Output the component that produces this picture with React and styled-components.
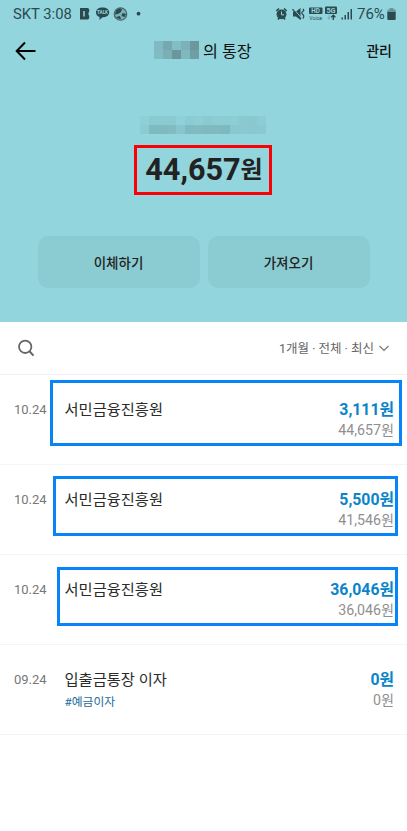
import React from 'react';
import styled, { createGlobalStyle } from 'styled-components';

const GlobalStyle = createGlobalStyle`
  * {
    box-sizing: border-box;
  }

  body {
    margin: 0;
    background: #fff;
    font-family: Roboto, 'Noto Sans CJK KR', sans-serif;
    color: #222;
  }
`;

const Screen = styled.div`
  width: 407px;
  height: 831px;
  overflow: hidden;
  background: #fff;
`;

const Header = styled.header`
  height: 322px;
  background: #92d5dd;
`;

const StatusBar = styled.div`
  display: flex;
  justify-content: space-between;
  align-items: center;
  height: 28px;
  padding: 0 11px 0 13px;
  color: #2b4a50;
  font-size: 15px;
  line-height: 28px;

  svg {
    display: block;
  }
`;

const StatusGroup = styled.div`
  display: flex;
  align-items: center;
  white-space: nowrap;
`;

const StatusText = styled.span`
  width: ${props => props.$width}px;
  font-size: ${props => props.$size}px;
`;

const TitleBar = styled.div`
  display: grid;
  grid-template-columns: 139px 1fr 60px;
  align-items: center;
  height: 46px;
  padding: 0 15px;

  svg {
    display: block;
  }
`;

const AccountName = styled.div`
  display: flex;
  align-items: flex-start;
  color: #111;
  font-size: 16.2px;
  line-height: 21px;
  white-space: nowrap;
`;

const Manage = styled.button`
  padding: 0;
  border: 0;
  background: none;
  color: #111;
  font: inherit;
  font-size: 14px;
  font-weight: 500;
  line-height: 24px;
  text-align: right;
`;

const Mosaic = styled.div`
  display: grid;
  grid-template-columns: repeat(${props => props.$columns}, 9px);
  grid-auto-rows: 9px;
`;

const Tile = styled.span`
  background: ${props => props.$color};
`;

const Summary = styled.div`
  display: flex;
  flex-direction: column;
  align-items: center;
  padding-top: 42px;

  > ${Mosaic} {
    margin-right: 2px;
  }
`;

const Balance = styled.div`
  display: flex;
  justify-content: center;
  align-items: center;
  width: 138px;
  height: 50px;
  margin: 11px 1px 0 0;
  padding-left: 2px;
  border: 3px solid #fb0007;
  color: #222;
  font-size: 30.6px;
  font-weight: 700;
  line-height: 44px;
  white-space: nowrap;

  small {
    font-size: 24px;
    line-height: 44px;
  }
`;

const Actions = styled.div`
  display: flex;
  gap: 8px;
  margin-top: 41px;
`;

const ActionButton = styled.button`
  width: 162px;
  height: 52px;
  padding: 0;
  border: 0;
  border-radius: 10px;
  background: #8bccd2;
  color: #222;
  font: inherit;
  font-size: 13.5px;
  font-weight: 500;
`;

const Toolbar = styled.div`
  display: flex;
  justify-content: space-between;
  align-items: center;
  height: 53px;
  padding: 0 18px;
  border-bottom: 1px solid #f1f1f1;

  svg {
    display: block;
  }
`;

const Filter = styled.div`
  display: flex;
  align-items: center;
  gap: 5px;
  padding-top: 1px;
  color: #666;
  font-size: 12.5px;
  line-height: 20px;
  white-space: nowrap;
`;

const Row = styled.div`
  position: relative;
  display: grid;
  grid-template-columns: 50.5px 1fr auto;
  align-items: start;
  height: 90px;
  padding: 24px 13px 0 14px;
  border-bottom: 1px solid #f4f4f4;
  white-space: nowrap;
`;

const RowDate = styled.div`
  color: #777;
  font-size: 13px;
  line-height: 22px;
`;

const RowTitle = styled.div`
  color: #2b2b2b;
  font-size: 15.3px;
  line-height: 22px;
`;

const Tag = styled.div`
  color: #1d6b9c;
  font-size: 11.8px;
  line-height: 22px;
`;

const Amount = styled.div`
  color: #0b84c8;
  font-size: 15.8px;
  font-weight: 700;
  line-height: 22px;
  text-align: right;
`;

const Remaining = styled.div`
  color: #8f8f8f;
  font-size: 14.2px;
  line-height: 18px;
  text-align: right;
`;

// hand-placed marker drawn over a row
const Marker = styled.div`
  position: absolute;
  top: ${props => props.$top}px;
  left: ${props => props.$left}px;
  right: ${props => props.$right}px;
  height: ${props => props.$height}px;
  border: 3px solid #0684f8;
`;

const nameTiles = [
  '#80b9c0', '#76a9af', '#84bec5', '#7bb1b8', '#6b979d',
  '#82bcc3', '#7aafb6', '#6a969c', '#80b8bf', '#6f9ea5',
];

const numberTiles = [
  '#8fd0d8', '#8acbd2', '#8acad1', '#8bcad1', '#8fd1d8', '#8bcbd2', '#8dced5',
  '#8acad1', '#8ccdd4', '#8ccdd4', '#8dced5', '#89c9d0', '#89c8cf', '#8ccdd4',
  '#8bcbd2', '#80bac1', '#80bac1', '#82bcc3', '#88c5cc', '#80bac1', '#81bbc2',
  '#80bac1', '#80b9c0', '#7fb8bf', '#8ac8cf', '#8bc9d0', '#8ac8cf', '#8bc9d0',
];

const transactions = [
  { date: '10.24', title: '서민금융진흥원', amount: '3,111원', remaining: '44,657원', marker: { $top: 5, $left: 50, $right: 5.5, $height: 66 } },
  { date: '10.24', title: '서민금융진흥원', amount: '5,500원', remaining: '41,546원', marker: { $top: 11, $left: 53, $right: 9, $height: 60 } },
  { date: '10.24', title: '서민금융진흥원', amount: '36,046원', remaining: '36,046원', marker: { $top: 12, $left: 57, $right: 9, $height: 59 } },
  { date: '09.24', title: '입출금통장 이자', tag: '#예금이자', amount: '0원', remaining: '0원' },
];

const NoticeIcons = () => (
  <svg width="64" height="16" viewBox="0 0 64 16" fill="#2b4a50">
    <path d="M1 2h7.500q1.800 0 1.800 3l-1 2.800 1 2.700q0 3-1.800 3H1z" />
    <path d="M5 5v5.500" stroke="#92d5dd" strokeWidth="1.500" />
    <path d="M23.500 1.500c3.900 0 6.700 2 6.700 4.900s-2.800 4.900-6.700 4.900L20.500 14v-3C18.300 10.200 17 8.600 17 6.400c0-2.900 2.600-4.900 6.500-4.900z" />
    <text x="23.500" y="8.200" fontSize="4.600" fontWeight="700" textAnchor="middle" fill="#92d5dd">TALK</text>
    <circle cx="41.500" cy="8" r="6.200" fill="#78b1b8" stroke="#46686e" strokeWidth="1.300" />
    <path d="M37 4.500q3-3 6-1.500l-1 3-3 2-3 .5zM43.500 7l3.500 1-1.500 3-3-1zM37 11l4-1 1 3q-3 .5-5-2z" />
    <circle cx="59.500" cy="7.700" r="1.900" />
  </svg>
);

const SystemIcons = () => (
  <svg width="82" height="18" viewBox="0 0 82 18" fill="#2b4a50">
    <circle cx="6.500" cy="9.300" r="4.900" />
    <path d="M1.300 6L4 3.500M11.700 6L9 3.500M3 14.500l1.500-2M10 14.500l-1.500-2" stroke="#2b4a50" strokeWidth="1.700" />
    <path d="M6.500 6.500v3.300h2.600" fill="none" stroke="#92d5dd" />
    <path d="M18 6.500h3L25.500 3v12L21 11.500h-3z" />
    <path d="M18.600 3.800l8.500 10" stroke="#92d5dd" strokeWidth="1" />
    <path d="M17.500 4.200l8.500 10" stroke="#2b4a50" strokeWidth="1.300" />
    <path d="M27.800 4q2 1.200 0 2.500t0 3 0 4" fill="none" stroke="#2b4a50" strokeWidth="1.200" />
    <rect x="34" y="2.500" width="13.500" height="6.500" rx="1" />
    <text x="40.700" y="8" fontSize="6.400" fontWeight="700" textAnchor="middle" fill="#92d5dd">HD</text>
    <text x="40.700" y="14.700" fontSize="5.200" textAnchor="middle">Voice</text>
    <rect x="50" y="1.500" width="12" height="7.500" rx="1" />
    <text x="56" y="7.900" fontSize="7.300" fontWeight="700" textAnchor="middle" fill="#92d5dd">5G</text>
    <path d="M54 10v4M52.500 12.600L54 14.200l1.500-1.600" fill="none" stroke="#70a8af" />
    <path d="M58.300 15v-4.500M56.200 12.300l2.100-2 2.100 2" fill="none" stroke="#2b4a50" strokeWidth="1.400" />
    <path d="M66.500 12.500H68v2h-1.500zM69.500 10H71v4.500h-1.500zM72.500 7H74v7.500h-1.500zM75.500 4H77v10.500h-1.500z" />
  </svg>
);

const BatteryIcon = () => (
  <svg width="9" height="14" viewBox="0 0 9 14" fill="#2b4a50">
    <path d="M2.500 1h4v1.500H8q.7 0 .7.700V6H.3V3.200q0-.7.700-.7h1.500z" fill="#65969d" />
    <path d="M.3 5h8.400v7q0 1-1 1H1.300q-1 0-1-1z" />
  </svg>
);

const BackIcon = () => (
  <svg width="22" height="20" viewBox="0 0 22 20" fill="none" stroke="#000" strokeWidth="2">
    <path d="M20.500 10H2M10 1.500L1.700 10l8.300 8.500" />
  </svg>
);

const SearchIcon = () => (
  <svg width="17" height="18" viewBox="0 0 17 18" fill="none" stroke="#666" strokeWidth="1.800">
    <circle cx="7.200" cy="7.800" r="6.200" />
    <path d="M11.500 12.300l4 4.300" strokeWidth="2" />
  </svg>
);

const ChevronIcon = () => (
  <svg width="10" height="7" viewBox="0 0 10 7" fill="none" stroke="#777" strokeWidth="1.200">
    <path d="M.5 1l4.500 4.500L9.500 1" />
  </svg>
);

const Transaction = ({ date, title, tag, amount, remaining, marker }) => (
  <Row>
    <RowDate>{date}</RowDate>
    <div>
      <RowTitle>{title}</RowTitle>
      {tag && <Tag>{tag}</Tag>}
    </div>
    <div>
      <Amount>{amount}</Amount>
      <Remaining>{remaining}</Remaining>
    </div>
    {marker && <Marker {...marker} />}
  </Row>
);

const App = () => (
  <Screen>
    <GlobalStyle />
    <Header>
      <StatusBar>
        <StatusGroup>
          <StatusText $width={66} $size={14.8}>SKT 3:08</StatusText>
          <NoticeIcons />
        </StatusGroup>
        <StatusGroup>
          <SystemIcons />
          <StatusText $width={30} $size={15}>76%</StatusText>
          <BatteryIcon />
        </StatusGroup>
      </StatusBar>
      <TitleBar>
        <BackIcon />
        <AccountName>
          <Mosaic $columns={5}>
            {nameTiles.map((color, i) => <Tile key={i} $color={color} />)}
          </Mosaic>
          &nbsp;의 통장
        </AccountName>
        <Manage>관리</Manage>
      </TitleBar>
      <Summary>
        <Mosaic $columns={14}>
          {numberTiles.map((color, i) => <Tile key={i} $color={color} />)}
        </Mosaic>
        <Balance>44,657<small>원</small></Balance>
        <Actions>
          <ActionButton>이체하기</ActionButton>
          <ActionButton>가져오기</ActionButton>
        </Actions>
      </Summary>
    </Header>
    <Toolbar>
      <SearchIcon />
      <Filter>
        1개월 · 전체 · 최신
        <ChevronIcon />
      </Filter>
    </Toolbar>
    {transactions.map((item, i) => <Transaction key={i} {...item} />)}
  </Screen>
);

export default App;
